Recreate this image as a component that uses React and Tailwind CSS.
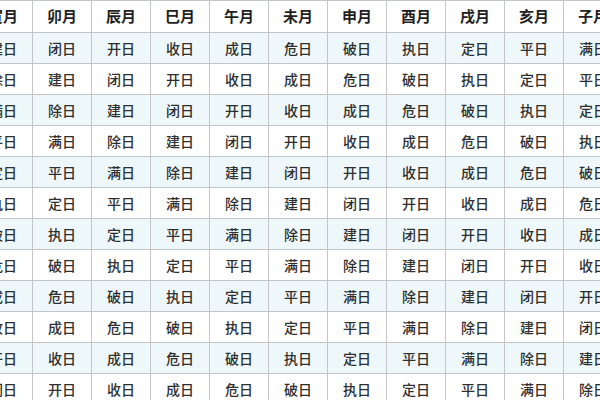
const months = ['寅月', '卯月', '辰月', '巳月', '午月', '未月', '申月', '酉月', '戌月', '亥月', '子月'];
const officers = ['建', '除', '满', '平', '定', '执', '破', '危', '成', '收', '开', '闭'];

export default function App() {
  return (
    <div
      className="w-[600px] h-[400px] overflow-hidden bg-white text-[#2f2f2f]"
      style={{ fontFamily: '"Noto Sans CJK SC", "Noto Sans", sans-serif' }}
    >
      <div className="ml-[-26px] w-[649px] border-t border-[#c2c6c9]">
        <div className="grid grid-cols-[repeat(11,59px)] h-[32px] bg-white">
          {months.map((m) => (
            <div
              key={m}
              className="flex items-center justify-center border-r border-b border-[#c2c6c9] text-[15px] font-bold text-[#1f1f1f]"
            >
              {m}
            </div>
          ))}
        </div>
        {officers.map((_, r) => (
          <div
            key={r}
            className={`grid grid-cols-[repeat(11,59px)] h-[31px] ${r % 2 === 0 ? 'bg-[#eef8fb]' : 'bg-white'}`}
          >
            {months.map((m, k) => (
              <div
                key={m}
                className="flex items-center justify-center border-r border-b border-[#c2c6c9] text-[14px] font-medium"
              >
                {officers[(((r - k) % 12) + 12) % 12]}日
              </div>
            ))}
          </div>
        ))}
      </div>
    </div>
  );
}
